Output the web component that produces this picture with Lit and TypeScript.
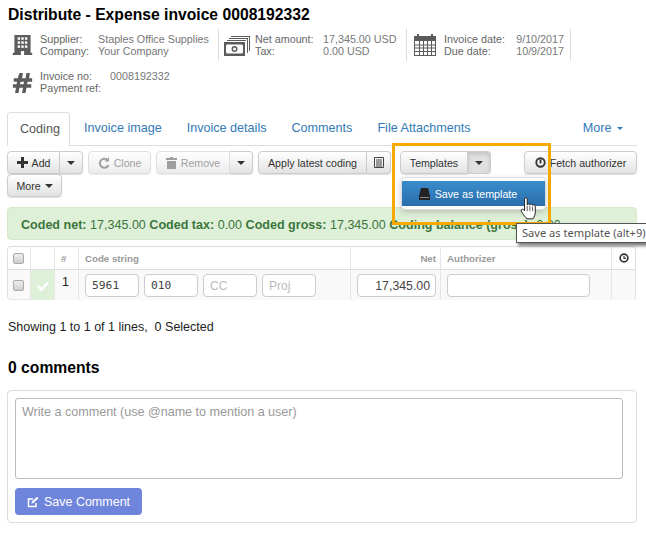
import { LitElement, html, css, svg } from "lit";
import { customElement } from "lit/decorators.js";

const caret = html`<span class="caret"></span>`;
const ic = {
  building: svg`<path d="M3 0h20v22h2v3H15v-5h-4v5H1v-3h2z"/><g fill="#fff"><rect x="7" y="3" width="3" height="3"/><rect x="11.500" y="3" width="3" height="3"/><rect x="16" y="3" width="3" height="3"/><rect x="7" y="8" width="3" height="3"/><rect x="11.500" y="8" width="3" height="3"/><rect x="16" y="8" width="3" height="3"/><rect x="7" y="13" width="3" height="3"/><rect x="11.500" y="13" width="3" height="3"/><rect x="16" y="13" width="3" height="3"/></g>`,
  money: svg`<path d="M7 1h19v15h-1V2H7zM5 3h19v15h-1V4H5zM3 5h19v1H3z"/><path fill-rule="evenodd" d="M0 7h21v14H0zM2.500 9.500a2 2 0 0 1-.5 1.500v6a2 2 0 0 1 .5 1.500h16a2 2 0 0 1 .5-1.500v-6a2 2 0 0 1-.5-1.500zM10.500 11a3 3 0 1 1 0 6 3 3 0 0 1 0-6zm0 1.500a1.500 1.500 0 1 0 0 3 1.500 1.500 0 0 0 0-3z"/>`,
  cal: svg`<path fill-rule="evenodd" d="M0 2h3V0h2v2h12V0h2v2h3v20H0zM1 7v14h20V7z"/><path d="M5 7h1v14H5zM9 7h1v14H9zM13 7h1v14h-1zM17 7h1v14h-1zM1 10.500h20v1H1zM1 13.500h20v1H1zM1 17h20v1H1z"/>`,
  hash: svg`<path fill-rule="evenodd" d="M7.500 1h4l-1 6h4l1-6h4l-1 6H22v4h-5.200l-.6 3H21v4h-5.500l-1 6h-4l1-6h-4l-1 6h-4l1-6H0v-4h4.200l.6-3H1V7h4.500zm1.300 10-.6 3h4l.6-3z"/>`,
};
const i = (n: keyof typeof ic, w: number, h: number, vb: string) =>
  html`<svg class="ic" width=${w} height=${h} viewBox=${vb} fill="#5c5c5c">${ic[n]}</svg>`;
const plus = html`<svg width="11" height="11" viewBox="0 0 11 11" fill="#333"><path d="M4 0h3v4h4v3H7v4H4V7H0V4h4z"/></svg>`;
const clock = (s: number) => html`<svg width=${s} height=${s} viewBox="0 0 13 13" fill="none" stroke="#333" stroke-width="2.200"><circle cx="6.500" cy="6.500" r="5"/><path d="M6.500 3.500v3.500h2.500" stroke-width="1.500"/></svg>`;
const alertClock = html`<svg width="11" height="11" viewBox="0 0 13 13" fill="none" stroke="#333" stroke-width="2.200"><circle cx="6.500" cy="6.500" r="5"/><path d="M6.500 3v4.500" stroke-width="2.200"/></svg>`;

@customElement("app-root")
export class AppRoot extends LitElement {
  static styles = css`
    :host { display: block; position: relative; width: 646px; height: 536px; overflow: hidden; background: #fff; color: #333;
      font-family: "Liberation Sans", Arial, sans-serif; font-size: 12px; }
    * { box-sizing: border-box; }
    .page { padding: 6px 9px 0 7px; }
    h1 { margin: 0 0 0 1px; font-size: 15.700px; line-height: 18px; font-weight: bold; color: #000; }
    .info { display: flex; flex-wrap: wrap; margin-top: 5px; color: #777; font-size: 10.750px; line-height: 12px; }
    .block { display: flex; align-items: center; height: 32px; border-right: 1px solid #ddd; }
    .b1 { width: 212px; padding-left: 5px; } .b2 { width: 188px; padding-left: 5px; } .b3 { width: 164px; padding-left: 7px; }
    .b4 { width: 212px; padding-left: 5px; border: none; margin-top: 3px; height: 36px; }
    .ic { flex: none; }
    .b1 .ic, .b4 .ic { margin-right: 7px; } .b2 .ic { margin-right: 5px; } .b3 .ic { margin-right: 8px; }
    .kv { display: grid; }
    .kv span:nth-child(odd) { color: #666; }
    .b1 .kv { grid-template-columns: 58px auto; }
    .b2 .kv { grid-template-columns: 68px auto; }
    .b3 .kv { grid-template-columns: 70px 50px; }
    .b3 .kv span:nth-child(even) { text-align: right; }
    .b4 .kv { grid-template-columns: 70px auto; }
    .tabs { display: flex; align-items: stretch; height: 34px; margin-top: 12px; border-bottom: 1px solid #ddd; font-size: 12.600px; color: #337ab7; }
    .tab { padding: 9px 12px 0 13px; }
    .tab.on { color: #555; background: #fff; border: 1px solid #ddd; border-bottom: none; border-radius: 4px 4px 0 0; height: 34px; padding: 9px 0 0 12px; width: 63px; margin-right: 1px; }
    .tab.more { margin-left: auto; padding-right: 14px; font-size: 12.600px; }
    .tab .caret { border-top-color: #337ab7; margin-left: 2px; border-width: 3.500px 3.500px 0; vertical-align: 2px; }
    .toolbar { display: flex; flex-wrap: wrap; margin-top: 5px; width: 632px; }
    .group { display: flex; margin-right: 5px; height: 23px; }
    .group.t { margin-left: 4px; margin-right: 33px; }
    .btn { display: flex; align-items: center; justify-content: center; gap: 4px; height: 23px; border: 1px solid #ccc; border-radius: 4px;
      background: linear-gradient(#fff, #e2e2e2); box-shadow: 0 1px 1px rgba(0,0,0,.12); color: #333; font-size: 10.600px; white-space: nowrap; }
    .group .btn:first-child:not(:last-child) { border-radius: 4px 0 0 4px; }
    .group .btn:last-child:not(:first-child) { border-radius: 0 4px 4px 0; border-left: none; }
    .btn.off { opacity: .62; color: #666; }
    .btn.pressed { background: #e0e0e0; box-shadow: inset 0 2px 4px rgba(0,0,0,.14); }
    .caret { display: inline-block; width: 0; height: 0; border-left: 4px solid transparent; border-right: 4px solid transparent; border-top: 4px solid #333; }
    .alert { height: 33px; margin-top: 10px; padding: 10px 12px 0 13px; background: #dff0d8; border: 1px solid #d6e9c6; border-radius: 4px; color: #3c763d; font-size: 12.550px; white-space: nowrap; overflow: hidden; }
    .alert b { font-weight: bold; }
    .table { display: grid; grid-template-columns: 24px 24px 24px 272px 90px 171px 24px; grid-template-rows: 24px 30px; margin-top: 6px; width: 630px; }
    .table > div { border-right: 1px solid #e6e6e6; display: flex; align-items: center; }
    .th { border-top: 1px solid #ddd; border-bottom: 1px solid #ddd; color: #999; font-size: 9.700px; font-weight: bold; padding-left: 6px; }
    .table .th:first-child { border-left: 1px solid #e0e0e0; border-radius: 4px 0 0 0; }
    .table .th:nth-child(7) { border-radius: 0 4px 0 0; justify-content: center; border-right: 1px solid #ddd; padding-left: 0; }
    .th.r { justify-content: flex-end; padding-right: 4px; padding-left: 0; }
    .td { background: #f9f9f9; padding-top: 1px; }
    .td.first { border-left: 1px solid #e0e0e0; border-bottom: 1px solid #e6e6e6; border-radius: 0 0 0 4px; }
    .td.ok { background: #dff0d8; justify-content: center; }
    .td.num { padding-left: 7px; font-size: 12.500px; color: #222; align-items: flex-start; padding-top: 5px; }
    .td.codes { gap: 5px; padding-left: 6px; }
    .td.pad { padding-left: 6px; }
    .chk { display: block; width: 11px; height: 11px; margin-left: 5px; border: 1px solid #aaa; border-radius: 2px; background: linear-gradient(#eee, #cfcfcf); }
    .inp { display: flex; align-items: center; height: 23px; background: #fff; border: 1px solid #ccc; border-radius: 4px; font-size: 12px; padding: 0 6px; }
    .inp.code { width: 54px; font-family: "DejaVu Sans Mono", monospace; font-size: 11.300px; color: #444; }
    .inp.ph { width: 54px; color: #bbb; }
    .inp.net { width: 79px; justify-content: flex-end; font-size: 12.300px; color: #444; padding: 0 5px; }
    .inp.auth { width: 143px; }
    .showing { margin: 21px 0 0 1px; font-size: 12.500px; line-height: 13px; color: #222; white-space: pre; }
    h2 { margin: 25px 0 0 1px; font-size: 15.700px; line-height: 18px; font-weight: bold; color: #000; }
    .card { margin-top: 13px; height: 133px; width: 630px; padding: 7px; border: 1px solid #ddd; border-radius: 4px; }
    .area { height: 81px; width: 608px; border: 1px solid #bbb; border-radius: 3px; padding: 6px 6px; font-size: 12.550px; color: #999; }
    .save { display: flex; align-items: center; justify-content: center; gap: 5px; margin-top: 9px; width: 127px; height: 27px; border-radius: 4px; background: #6f84db; color: #fff; font-size: 12.500px; }
    .frame { position: absolute; left: 392px; top: 143px; width: 159px; height: 82px; border: 3px solid #f7a900; }
    .menu { position: absolute; left: 401px; top: 177px; width: 145px; height: 33px; padding: 3px 0; background: #fff; border: 1px solid #ddd; border-radius: 4px; box-shadow: 0 2px 6px rgba(0,0,0,.2); }
    .item { display: flex; align-items: center; justify-content: center; gap: 5px; height: 25px; padding-right: 11px; color: #fff; font-size: 10.700px; background: linear-gradient(#3a8ccb, #2a6ead); }
    .tip { position: absolute; left: 516px; top: 223px; width: 140px; height: 20px; padding: 1px 0 0 5px; background: #fff; border: 1px solid #555; box-shadow: 2px 3px 3px rgba(0,0,0,.5); font-family: "Noto Sans", sans-serif; font-size: 11.100px; color: #555; white-space: nowrap; }
    .hand { position: absolute; left: 520px; top: 196px; }
  `;

  render() {
    return html`<div class="page">
      <h1>Distribute - Expense invoice 0008192332</h1>
      <div class="info">
        <div class="block b1">${i("building", 21, 22, "0 0 26 25")}<div class="kv"><span>Supplier:</span><span>Staples Office Supplies</span><span>Company:</span><span>Your Company</span></div></div>
        <div class="block b2">${i("money", 26, 21, "0 0 26 21")}<div class="kv"><span>Net amount:</span><span>17,345.00 USD</span><span>Tax:</span><span>0.00 USD</span></div></div>
        <div class="block b3">${i("cal", 22, 22, "0 0 22 22")}<div class="kv"><span>Invoice date:</span><span>9/10/2017</span><span>Due date:</span><span>10/9/2017</span></div></div>
        <div class="block b4">${i("hash", 21, 21, "0 0 22 24")}<div class="kv"><span>Invoice no:</span><span>0008192332</span><span>Payment ref:</span><span></span></div></div>
      </div>
      <div class="tabs">
        <div class="tab on">Coding</div><div class="tab">Invoice image</div><div class="tab">Invoice details</div><div class="tab">Comments</div><div class="tab">File Attachments</div>
        <div class="tab more">More ${caret}</div>
      </div>
      <div class="toolbar">
        <div class="group"><div class="btn" style="width:53px">${plus}Add</div><div class="btn" style="width:23px">${caret}</div></div>
        <div class="group"><div class="btn off" style="width:63px"><svg width="12" height="12" viewBox="0 0 12 12" fill="none" stroke="#666" stroke-width="2"><path d="M10 3.500A4.500 4.500 0 1 0 10.500 8"/><path d="M11 0v4.500H6.500" fill="#666" stroke="none"/></svg>Clone</div></div>
        <div class="group"><div class="btn off" style="width:74px"><svg width="11" height="12" viewBox="0 0 11 12" fill="#666"><path d="M4 0h3v1h4v2H0V1h4zM1 4h9v8H1z"/></svg>Remove</div><div class="btn" style="width:23px">${caret}</div></div>
        <div class="group"><div class="btn" style="width:109px">Apply latest coding</div><div class="btn" style="width:24px"><svg width="10" height="11" viewBox="0 0 10 11" fill="none" stroke="#444"><path d="M.5.500h9v10h-9zM2 3h6M2 5h6M2 7h6M2 9h6"/></svg></div></div>
        <div class="group t"><div class="btn" style="width:68px">Templates</div><div class="btn pressed" style="width:23px">${caret}</div></div>
        <div class="group" style="margin-right:0"><div class="btn" style="width:113px">${alertClock}Fetch authorizer</div></div>
        <div class="group" style="margin-right:0"><div class="btn" style="width:55px">More ${caret}</div></div>
      </div>
      <div class="alert"><b>Coded net:</b> 17,345.00 <b>Coded tax:</b> 0.00 <b>Coded gross:</b> 17,345.00 <b>Coding balance (gross):</b> 0.00</div>
      <div class="table">
        <div class="th" style="padding:0"><span class="chk"></span></div><div class="th"></div><div class="th">#</div><div class="th">Code string</div><div class="th r">Net</div><div class="th">Authorizer</div><div class="th">${clock(10)}</div>
        <div class="td first"><span class="chk"></span></div>
        <div class="td ok"><svg width="12" height="10" viewBox="0 0 12 10" fill="none" stroke="#fff" stroke-width="2.500"><path d="M1 5l3.500 3.500L11 1.500"/></svg></div>
        <div class="td num">1</div>
        <div class="td codes"><div class="inp code">5961</div><div class="inp code">010</div><div class="inp ph">CC</div><div class="inp ph">Proj</div></div>
        <div class="td pad"><div class="inp net">17,345.00</div></div>
        <div class="td pad"><div class="inp auth"></div></div>
        <div class="td"></div>
      </div>
      <div class="showing">Showing 1 to 1 of 1 lines,  0 Selected</div>
      <h2>0 comments</h2>
      <div class="card">
        <div class="area">Write a comment (use @name to mention a user)</div>
        <div class="save"><svg width="12" height="12" viewBox="0 0 12 12" fill="none" stroke="#fff" stroke-width="1.500"><path d="M9 7v3.500H1.500V3H6"/><path d="M4.500 7.500l.4-2L10 .8l1.500 1.500L6.500 7z" fill="#fff" stroke="none"/></svg>Save Comment</div>
      </div>
    </div>
    <div class="frame"></div>
    <div class="menu"><div class="item"><svg width="11" height="12" viewBox="0 0 11 12" fill="#222"><path d="M2 0h7l2 8v4H0V8z"/><path d="M1 9.500h9" stroke="#888"/></svg>Save as template</div></div>
    <div class="tip">Save as template (alt+9)</div>
    <svg class="hand" width="18" height="25" viewBox="0 0 20 26"><path d="M5 2.500c0-2 3-2 3 0V9c.5-1.500 3-1.500 3 0 .5-1.200 3-1 3 .5.500-1 3-.8 3 1V17c0 3-1.500 6-2.500 7.500H7.500C6 22 3 19.500 1.500 16c-.8-2 1.500-3 2.500-1.500L5 15.500z" fill="#fff" stroke="#222" stroke-width="1.100"/><path d="M8 10v6M11 10v6M14 11v5" stroke="#222" stroke-width=".8"/></svg>`;
  }
}
